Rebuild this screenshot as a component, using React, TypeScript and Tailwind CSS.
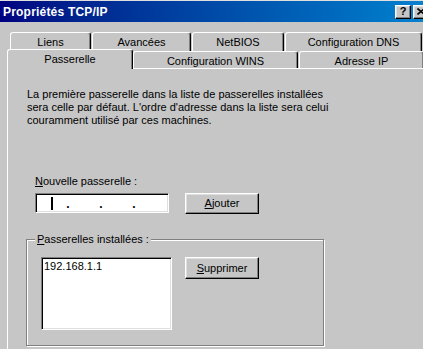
import React from 'react'

const font = { fontFamily: '"Liberation Sans", Arial, sans-serif' }

// Win98 raised button bevel
const raised =
  'border border-t-white border-l-white border-r-black border-b-black shadow-[inset_-1px_-1px_0_#808080,inset_1px_1px_0_#dfdfdf]'
// Win98 sunken field bevel
const sunken =
  'border border-t-[#808080] border-l-[#808080] border-r-white border-b-white shadow-[inset_1px_1px_0_#000,inset_-1px_-1px_0_#dfdfdf]'

interface TabProps {
  label: string
  width: string
  selected?: boolean
  front?: boolean
}

function Tab({ label, width, selected, front }: TabProps) {
  const height = selected ? 'h-[20px] relative z-10' : front ? 'h-[17px] mb-[1px]' : 'h-[19px]'
  return (
    <div
      className={`${width} ${height} shrink-0 bg-[#c6c6c6] border-t border-l border-r border-t-white border-l-white border-r-black rounded-t-[3px] shadow-[inset_-1px_0_0_#808080] pt-[3px] text-center text-[11px] leading-[13px] text-black whitespace-nowrap`}
    >
      {label}
    </div>
  )
}

function Win98Button({ children, className = '' }: { children: React.ReactNode; className?: string }) {
  return (
    <div
      className={`${raised} ${className} bg-[#c6c6c6] flex items-center justify-center text-[11px] leading-[13px] text-black`}
    >
      {children}
    </div>
  )
}

export default function App() {
  return (
    <div className="w-[423px] h-[349px] overflow-hidden bg-[#c6c6c6]" style={font}>
      <div className="w-[436px] border-t border-[#dfdfdf]">
        {/* Title bar */}
        <div className="h-[21px] bg-gradient-to-r from-[#000080] to-[#1084d0] flex items-center pl-[3px] pr-[7px]">
          <span className="text-white font-bold text-[12px] leading-[14px] tracking-[0.2px] whitespace-nowrap">
            Propriétés TCP/IP
          </span>
          <div className="flex-1" />
          <div className={`${raised} bg-[#c6c6c6] w-[16px] h-[14px] flex items-center justify-center text-[11px] font-bold leading-none text-black`}>
            ?
          </div>
          <div className={`${raised} bg-[#c6c6c6] w-[16px] h-[14px] ml-[2px] flex items-center justify-center`}>
            <svg width="8" height="7" viewBox="0 0 8 7">
              <path d="M0.5 0.5 L7.5 6.5 M7.5 0.5 L0.5 6.5" stroke="#000" strokeWidth="1.6" />
            </svg>
          </div>
        </div>

        {/* Tabs */}
        <div className="mt-[10px] flex gap-px pl-[10px]">
          <Tab label="Liens" width="w-[81px]" />
          <Tab label="Avancées" width="w-[99px]" />
          <Tab label="NetBIOS" width="w-[92px]" />
          <Tab label="Configuration DNS" width="w-[137px]" />
        </div>
        <div className="relative z-10 mt-[-2px] mb-[-1px] flex items-end pl-[7px] h-[20px]">
          <Tab label="Passerelle" width="w-[126px]" selected />
          <Tab label="Configuration WINS" width="w-[165px]" front />
          <div className="ml-px">
            <Tab label="Adresse IP" width="w-[125px]" front />
          </div>
        </div>

        {/* Panel */}
        <div className="ml-[7px] border-l border-t border-white h-[300px] text-[11px] leading-[13px] text-black">
          <div className="pt-[19px] pl-[19px] whitespace-nowrap">
            <div>La première passerelle dans la liste de passerelles installées</div>
            <div>sera celle par défaut. L'ordre d'adresse dans la liste sera celui</div>
            <div>couramment utilisé par ces machines.</div>
          </div>

          <div className="mt-[48px] pl-[27px]">
            <div>
              <u>N</u>ouvelle passerelle :
            </div>
            <div className="mt-[5px] flex items-start">
              <div className={`${sunken} bg-white w-[134px] h-[20px] flex items-center`}>
                <div className="w-[29px] ml-px flex justify-center">
                  <div className="w-[2px] h-[13px] bg-black" />
                </div>
                <span className="w-[4px] text-center font-bold text-[12px] pt-[3px]">.</span>
                <div className="w-[29px]" />
                <span className="w-[4px] text-center font-bold text-[12px] pt-[3px]">.</span>
                <div className="w-[29px]" />
                <span className="w-[4px] text-center font-bold text-[12px] pt-[3px]">.</span>
                <div className="w-[29px]" />
              </div>
              <Win98Button className="ml-[16px] w-[74px] h-[21px]">
                <span>
                  <u>A</u>jouter
                </span>
              </Win98Button>
            </div>
          </div>

          {/* Group box */}
          <div className="relative mt-[25px] ml-[18px] w-[298px] h-[107px] border border-[#808080] shadow-[1px_1px_0_#fff,inset_1px_1px_0_#fff] pt-[17px] pl-[14px] flex items-start">
            <div className="absolute top-[-7px] left-[8px] bg-[#c6c6c6] px-[2px] whitespace-nowrap">
              <u>P</u>asserelles installées :
            </div>
            <div className={`${sunken} bg-white w-[131px] h-[73px] pl-[2px] pt-[2px]`}>192.168.1.1</div>
            <Win98Button className="ml-[13px] w-[74px] h-[22px]">
              <span>
                <u>S</u>upprimer
              </span>
            </Win98Button>
          </div>
        </div>
      </div>
    </div>
  )
}
